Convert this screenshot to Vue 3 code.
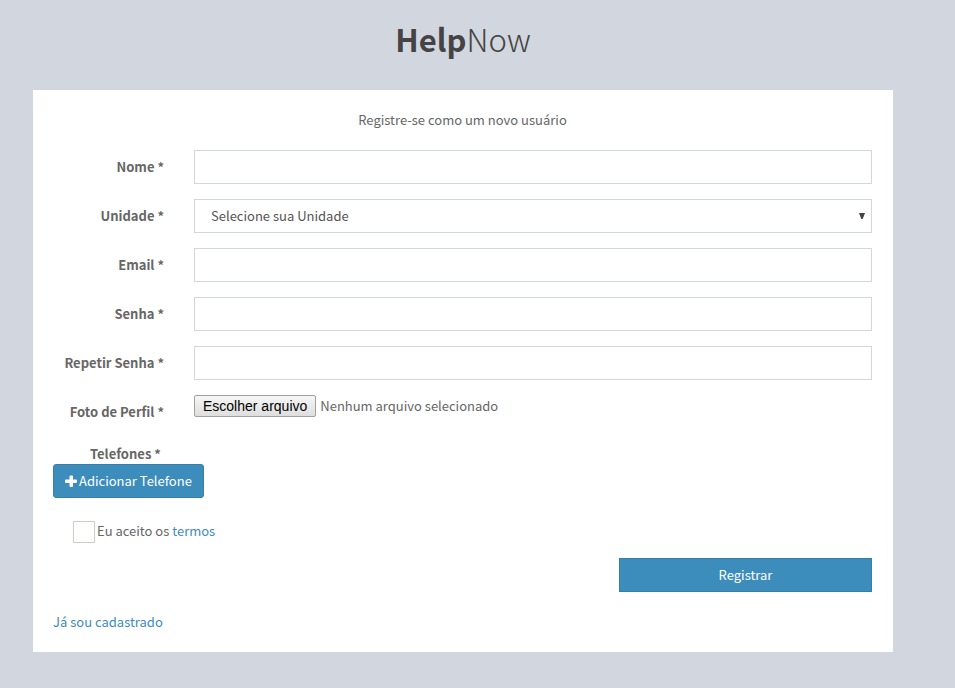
<script setup>
import { ref } from 'vue'

const fields = [
  { id: 'nome', label: 'Nome *', type: 'text' },
  { id: 'unidade', label: 'Unidade *', type: 'select' },
  { id: 'email', label: 'Email *', type: 'email' },
  { id: 'senha', label: 'Senha *', type: 'password' },
  { id: 'repetir', label: 'Repetir Senha *', type: 'password' },
]
const form = ref({ nome: '', unidade: '', email: '', senha: '', repetir: '' })
const accepted = ref(false)
const fileInput = ref(null)
const fileName = ref('Nenhum arquivo selecionado')

function onFile(event) {
  const file = event.target.files[0]
  fileName.value = file ? file.name : 'Nenhum arquivo selecionado'
}
</script>

<template>
  <main class="page">
    <h1 class="logo"><b>Help</b>Now</h1>
    <form class="box" @submit.prevent>
      <p class="intro">Registre-se como um novo usuário</p>

      <div v-for="field in fields" :key="field.id" class="row">
        <label class="label" :for="field.id">{{ field.label }}</label>
        <div class="cell">
          <div v-if="field.type === 'select'" class="select-wrap">
            <select :id="field.id" v-model="form[field.id]" class="control select">
              <option value="">Selecione sua Unidade</option>
            </select>
            <svg class="arrow" viewBox="0 0 6 6" aria-hidden="true"><path d="M0 0H6L3.7 6H2.3Z" /></svg>
          </div>
          <input v-else :id="field.id" v-model="form[field.id]" :type="field.type" class="control" />
        </div>
      </div>

      <div class="row">
        <label class="label" for="foto">Foto de Perfil *</label>
        <div class="cell file">
          <button type="button" class="file-button" @click="fileInput.click()">Escolher arquivo</button>
          <span>{{ fileName }}</span>
          <input id="foto" ref="fileInput" type="file" class="file-input" @change="onFile" />
        </div>
      </div>

      <div class="phones">
        <span class="phones-label">Telefones *</span>
        <button type="button" class="button add">
          <svg class="plus" viewBox="0 0 12 12" aria-hidden="true">
            <path d="M5.5 0.5H7Q8 0.5 8 1.5V4.5H11Q12 4.5 12 5.5V7Q12 8 11 8H8V11Q8 12 7 12H5.5Q4.5 12 4.5 11V8H1Q0 8 0 7V5.5Q0 4.5 1 4.5H4.5V1.5Q4.5 0.5 5.5 0.5Z" />
          </svg>
          Adicionar Telefone
        </button>
      </div>

      <div class="terms">
        <input id="aceito" v-model="accepted" type="checkbox" class="check" />
        <label for="aceito">Eu aceito os <a href="#termos">termos</a></label>
      </div>

      <div class="submit-row">
        <button type="submit" class="button submit">Registrar</button>
      </div>

      <a class="login" href="#login">Já sou cadastrado</a>
    </form>
  </main>
</template>

<style>
body {
  background: #d2d6de;
}
</style>

<style scoped>
.page,
.page * {
  box-sizing: border-box;
}
.page {
  padding: 15px 62px 36px 33px;
  color: #666;
  font-family: "Noto Sans CJK SC", "Open Sans", sans-serif;
  font-size: 13px;
  line-height: 20px;
}
.logo {
  margin: 0 0 27px;
  color: #444;
  font-size: 31px;
  font-weight: 300;
  line-height: 48px;
  text-align: center;
}
.logo b {
  font-weight: 700;
}
.box {
  padding: 20px 21px 20px 20px;
  background: #fff;
}
.intro {
  margin: 0 0 20px;
  text-align: center;
}
.row {
  display: grid;
  grid-template-columns: 141px minmax(0, 1fr);
  margin: 0 -15px 15px;
}
.label {
  padding: 7px 15px 0;
  font-weight: 700;
  text-align: right;
  white-space: nowrap;
}
.cell {
  padding: 0 15px;
}
.control {
  display: block;
  width: 100%;
  height: 34px;
  margin: 0;
  padding: 6px 12px;
  border: 1px solid #d2d6de;
  border-radius: 0;
  background: #fff;
  color: #555;
  font: inherit;
}
.select-wrap {
  position: relative;
}
.select {
  appearance: none;
  padding: 0 16px;
}
.arrow {
  position: absolute;
  top: 14px;
  right: 7px;
  width: 6px;
  height: 6px;
  fill: #444;
  pointer-events: none;
}
.file {
  position: relative;
  display: flex;
  align-items: center;
  align-self: start;
  gap: 4px;
}
.file-button {
  height: 22px;
  padding: 0 8px;
  border: 1px solid #a0a0a0;
  border-radius: 2px;
  background: linear-gradient(#f6f6f6, #dedede);
  color: #000;
  font: 14px/20px "Liberation Sans", sans-serif;
  white-space: nowrap;
}
.file-input {
  position: absolute;
  inset: 0 15px;
  opacity: 0;
  pointer-events: none;
}
.phones {
  display: flex;
  flex-direction: column;
  align-items: flex-start;
  padding-top: 7px;
}
.phones-label {
  padding-left: 37px;
  font-weight: 700;
}
.button {
  height: 34px;
  border: 1px solid #367fa9;
  background: #3c8dbc;
  color: #fff;
  font: inherit;
  white-space: nowrap;
}
.add {
  display: flex;
  align-items: center;
  gap: 2px;
  padding: 0 11px;
  border-radius: 3px;
}
.plus {
  width: 12px;
  height: 12px;
  fill: #fff;
}
.terms {
  display: flex;
  gap: 2px;
  margin: 23px 0 15px 20px;
}
.check {
  appearance: none;
  width: 22px;
  height: 22px;
  margin: 0;
  border: 1px solid #d0ccc6;
  background: #fff;
}
.check:checked {
  background: #3c8dbc;
}
a {
  color: #3c8dbc;
  text-decoration: none;
}
.submit-row {
  display: grid;
  grid-template-columns: 2fr 1fr;
  margin: 0 -15px 20px;
}
.submit {
  grid-column: 2;
  margin: 0 15px;
}
.login {
  display: block;
  width: fit-content;
}
</style>
